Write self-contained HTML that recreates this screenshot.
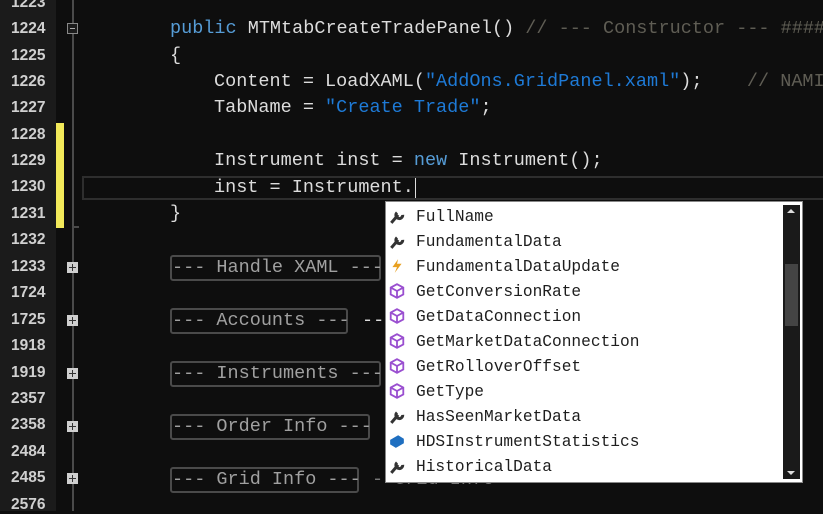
<!DOCTYPE html>
<html><head><style>
body{margin:0;width:823px;height:511px;background:#0e0e0e;overflow:hidden;position:relative;font-family:"Liberation Mono",monospace;}
.g{position:absolute;left:0;top:0;width:56px;height:511px;background:#1b1b1b;}
.n{position:absolute;left:11px;width:42px;color:#d0d0d0;font-size:15.5px;font-family:"Liberation Sans",sans-serif;font-weight:bold;text-align:left;}
.l{position:absolute;font-size:18.5px;color:#dcdcdc;white-space:pre;line-height:26px;}
.k{color:#569cd6}.s{color:#1e7ad6}.c{color:#5f5d54}
.box{position:absolute;left:170px;height:22px;border:2px solid #4a4a4a;border-radius:3px;color:#a0a0a0;font-size:18.5px;line-height:22px;white-space:pre;}
.pl{position:absolute;left:67px;width:11px;height:11px;background:#cfcfcf;}
.pl:before{content:"";position:absolute;left:2px;top:5px;width:7px;height:1px;background:#333}
.pl:after{content:"";position:absolute;left:5px;top:2px;width:1px;height:7px;background:#333}
.pop{position:absolute;left:385px;top:201px;width:418px;height:282px;background:#fff;border:1px solid #888;box-sizing:border-box;}
.it{position:absolute;left:30px;font-size:16.2px;color:#1e1e1e;white-space:pre;}
.ic{position:absolute;left:3px;width:16px;height:16px;}
</style></head><body>
<div class="g"></div>
<div style="position:absolute;left:56px;top:123px;width:8px;height:105px;background:#f2e95a"></div>
<div style="position:absolute;left:72px;top:0;width:2px;height:511px;background:#4a4a4a"></div>
<div style="position:absolute;left:67px;top:23px;width:11px;height:11px;border:1px solid #888;box-sizing:border-box;background:#1b1b1b"><div style="position:absolute;left:2px;top:4px;width:5px;height:1px;background:#aaa"></div></div>
<div style="position:absolute;left:73px;top:226px;width:6px;height:2px;background:#4a4a4a"></div>
<div style="position:absolute;left:82px;top:176px;width:745px;height:24px;border:2px solid #2e2e2e;box-sizing:border-box"></div>

<div class="n" style="top:-6px">1223</div>
<div class="n" style="top:20px">1224</div>
<div class="n" style="top:47px">1225</div>
<div class="n" style="top:73px">1226</div>
<div class="n" style="top:99px">1227</div>
<div class="n" style="top:126px">1228</div>
<div class="n" style="top:152px">1229</div>
<div class="n" style="top:178px">1230</div>
<div class="n" style="top:205px">1231</div>
<div class="n" style="top:231px">1232</div>
<div class="n" style="top:258px">1233</div>
<div class="n" style="top:284px">1724</div>
<div class="n" style="top:311px">1725</div>
<div class="n" style="top:337px">1918</div>
<div class="n" style="top:364px">1919</div>
<div class="n" style="top:390px">2357</div>
<div class="n" style="top:416px">2358</div>
<div class="n" style="top:443px">2484</div>
<div class="n" style="top:469px">2485</div>
<div class="n" style="top:496px">2576</div>

<div class="pl" style="top:262px"></div>
<div class="pl" style="top:315px"></div>
<div class="pl" style="top:368px"></div>
<div class="pl" style="top:421px"></div>
<div class="pl" style="top:473px"></div>

<div class="l" style="left:170px;top:16px"><span class="k">public</span> MTMtabCreateTradePanel() <span class="c">// --- Constructor --- #####</span></div>
<div class="l" style="left:170px;top:43px">{</div>
<div class="l" style="left:214px;top:69px">Content = LoadXAML(<span class="s">"AddOns.GridPanel.xaml"</span>);    <span class="c">// NAMI</span></div>
<div class="l" style="left:214px;top:95px">TabName = <span class="s">"Create Trade"</span>;</div>
<div class="l" style="left:214px;top:148px">Instrument inst = <span class="k">new</span> Instrument();</div>
<div class="l" style="left:214px;top:175px">inst = Instrument.</div>
<div style="position:absolute;left:415px;top:178px;width:1px;height:20px;background:#ddd"></div>
<div class="l" style="left:170px;top:201px">}</div>

<div class="box" style="top:255px;width:207px">--- Handle XAML ---</div>
<div class="box" style="top:308px;width:174px">--- Accounts ---</div>
<div class="l" style="left:362px;top:308px">--</div>
<div class="box" style="top:361px;width:207px">--- Instruments ---</div>
<div class="box" style="top:414px;width:196px">--- Order Info ---</div>
<div class="box" style="top:467px;width:185px">--- Grid Info ---</div>
<div class="l" style="left:372px;top:467px;color:#777">- Grid Info</div>

<div class="pop">
<div style="position:absolute;left:397px;top:3px;width:17px;height:274px;background:#1a1a1a"></div>
<div style="position:absolute;left:399px;top:62px;width:13px;height:62px;background:#444"></div>
<div style="position:absolute;left:401px;top:7px;width:0;height:0;border:4px solid transparent;border-bottom:4px solid #ddd;border-top:0"></div>
<div style="position:absolute;left:401px;top:269px;width:0;height:0;border:4px solid transparent;border-top:4px solid #ddd;border-bottom:0"></div>

<svg class="ic" style="top:6px" viewBox="0 0 14 14"><path d="M2 13 L8 6 M7 4 A3 3 0 1 0 12 6" stroke="#333" stroke-width="2.6" fill="none"/></svg>
<div class="it" style="top:6px">FullName</div>
<svg class="ic" style="top:31px" viewBox="0 0 14 14"><path d="M2 13 L8 6 M7 4 A3 3 0 1 0 12 6" stroke="#333" stroke-width="2.6" fill="none"/></svg>
<div class="it" style="top:31px">FundamentalData</div>
<svg class="ic" style="top:56px" viewBox="0 0 14 14"><path d="M8 1 L3 8 H7 L5 13 L11 5 H7 Z" fill="#e8a020"/></svg>
<div class="it" style="top:56px">FundamentalDataUpdate</div>
<svg class="ic" style="top:81px" viewBox="0 0 14 14"><path d="M7 1 L12.5 4 V10 L7 13 L1.5 10 V4 Z M7 7 L1.5 4 M7 7 L12.5 4 M7 7 V13" stroke="#9a4fd0" stroke-width="1.6" fill="none"/></svg>
<div class="it" style="top:81px">GetConversionRate</div>
<svg class="ic" style="top:106px" viewBox="0 0 14 14"><path d="M7 1 L12.5 4 V10 L7 13 L1.5 10 V4 Z M7 7 L1.5 4 M7 7 L12.5 4 M7 7 V13" stroke="#9a4fd0" stroke-width="1.6" fill="none"/></svg>
<div class="it" style="top:106px">GetDataConnection</div>
<svg class="ic" style="top:131px" viewBox="0 0 14 14"><path d="M7 1 L12.5 4 V10 L7 13 L1.5 10 V4 Z M7 7 L1.5 4 M7 7 L12.5 4 M7 7 V13" stroke="#9a4fd0" stroke-width="1.6" fill="none"/></svg>
<div class="it" style="top:131px">GetMarketDataConnection</div>
<svg class="ic" style="top:156px" viewBox="0 0 14 14"><path d="M7 1 L12.5 4 V10 L7 13 L1.5 10 V4 Z M7 7 L1.5 4 M7 7 L12.5 4 M7 7 V13" stroke="#9a4fd0" stroke-width="1.6" fill="none"/></svg>
<div class="it" style="top:156px">GetRolloverOffset</div>
<svg class="ic" style="top:181px" viewBox="0 0 14 14"><path d="M7 1 L12.5 4 V10 L7 13 L1.5 10 V4 Z M7 7 L1.5 4 M7 7 L12.5 4 M7 7 V13" stroke="#9a4fd0" stroke-width="1.6" fill="none"/></svg>
<div class="it" style="top:181px">GetType</div>
<svg class="ic" style="top:206px" viewBox="0 0 14 14"><path d="M2 13 L8 6 M7 4 A3 3 0 1 0 12 6" stroke="#333" stroke-width="2.6" fill="none"/></svg>
<div class="it" style="top:206px">HasSeenMarketData</div>
<svg class="ic" style="top:231px" viewBox="0 0 14 14"><path d="M1 6 L8 2 L13 5 V9 L6 13 L1 10 Z" fill="#1f6fc0"/></svg>
<div class="it" style="top:231px">HDSInstrumentStatistics</div>
<svg class="ic" style="top:256px" viewBox="0 0 14 14"><path d="M2 13 L8 6 M7 4 A3 3 0 1 0 12 6" stroke="#333" stroke-width="2.6" fill="none"/></svg>
<div class="it" style="top:256px">HistoricalData</div>
</div>
</body></html>
